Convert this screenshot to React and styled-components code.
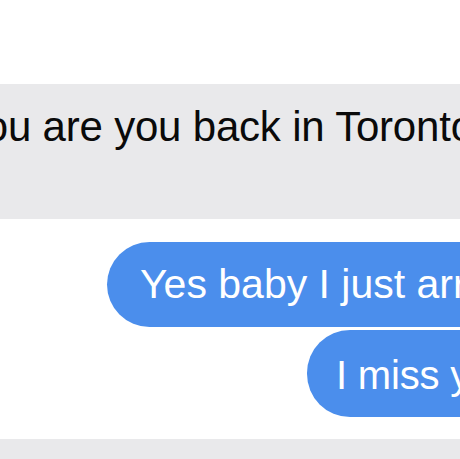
import React from "react";
import styled, { createGlobalStyle } from "styled-components";

const Global = createGlobalStyle`
  html, body {
    margin: 0;
    padding: 0;
    background: #ffffff;
    overflow: hidden;
  }
  body {
    font-family: "Liberation Sans", Arial, Helvetica, sans-serif;
    -webkit-font-smoothing: antialiased;
  }
`;

const Thread = styled.div`
  width: 460px;
  height: 459px;
  overflow: hidden;
  display: flex;
  flex-direction: column;
  padding-top: 84px;
  box-sizing: border-box;
`;

const Row = styled.div`
  display: flex;
  justify-content: flex-start;
  padding-left: ${(p) => p.$indent || 0}px;
  margin-top: ${(p) => p.$gap || 0}px;
  flex-shrink: 0;
`;

const Bubble = styled.div`
  flex-shrink: 0;
  white-space: nowrap;
  border-radius: 43px;
  font-size: ${(p) => p.$size}px;
  line-height: ${(p) => p.$line}px;
  padding: ${(p) => p.$pad};
  margin-left: ${(p) => p.$shift || 0}px;
  width: ${(p) => (p.$width ? `${p.$width}px` : "auto")};
  background: ${(p) => (p.$out ? "#4b8eec" : "#e9e9eb")};
  color: ${(p) => (p.$out ? "#ffffff" : "#0a0a0a")};
  letter-spacing: ${(p) => p.$track || 0}px;
`;

export default function App() {
  return (
    <>
      <Global />
      <Thread>
        <Row>
          <Bubble $size={42} $line={48} $pad="19px 60px 68px 60px" $shift={-96} $track={-0.2}>
            you are you back in Toronto?
          </Bubble>
        </Row>
        <Row $indent={107} $gap={23}>
          <Bubble $out $size={41} $line={46} $pad="19px 40px 20px 33px">
            Yes baby I just arrived
          </Bubble>
        </Row>
        <Row $indent={307} $gap={3}>
          <Bubble $out $size={40} $line={46} $pad="22px 40px 19px 29px" $track={-0.2}>
            I miss you
          </Bubble>
        </Row>
        <Row $gap={22}>
          <Bubble $size={42} $line={48} $pad="19px 0 40px 0" $shift={-100} $width={587} />
        </Row>
      </Thread>
    </>
  );
}
